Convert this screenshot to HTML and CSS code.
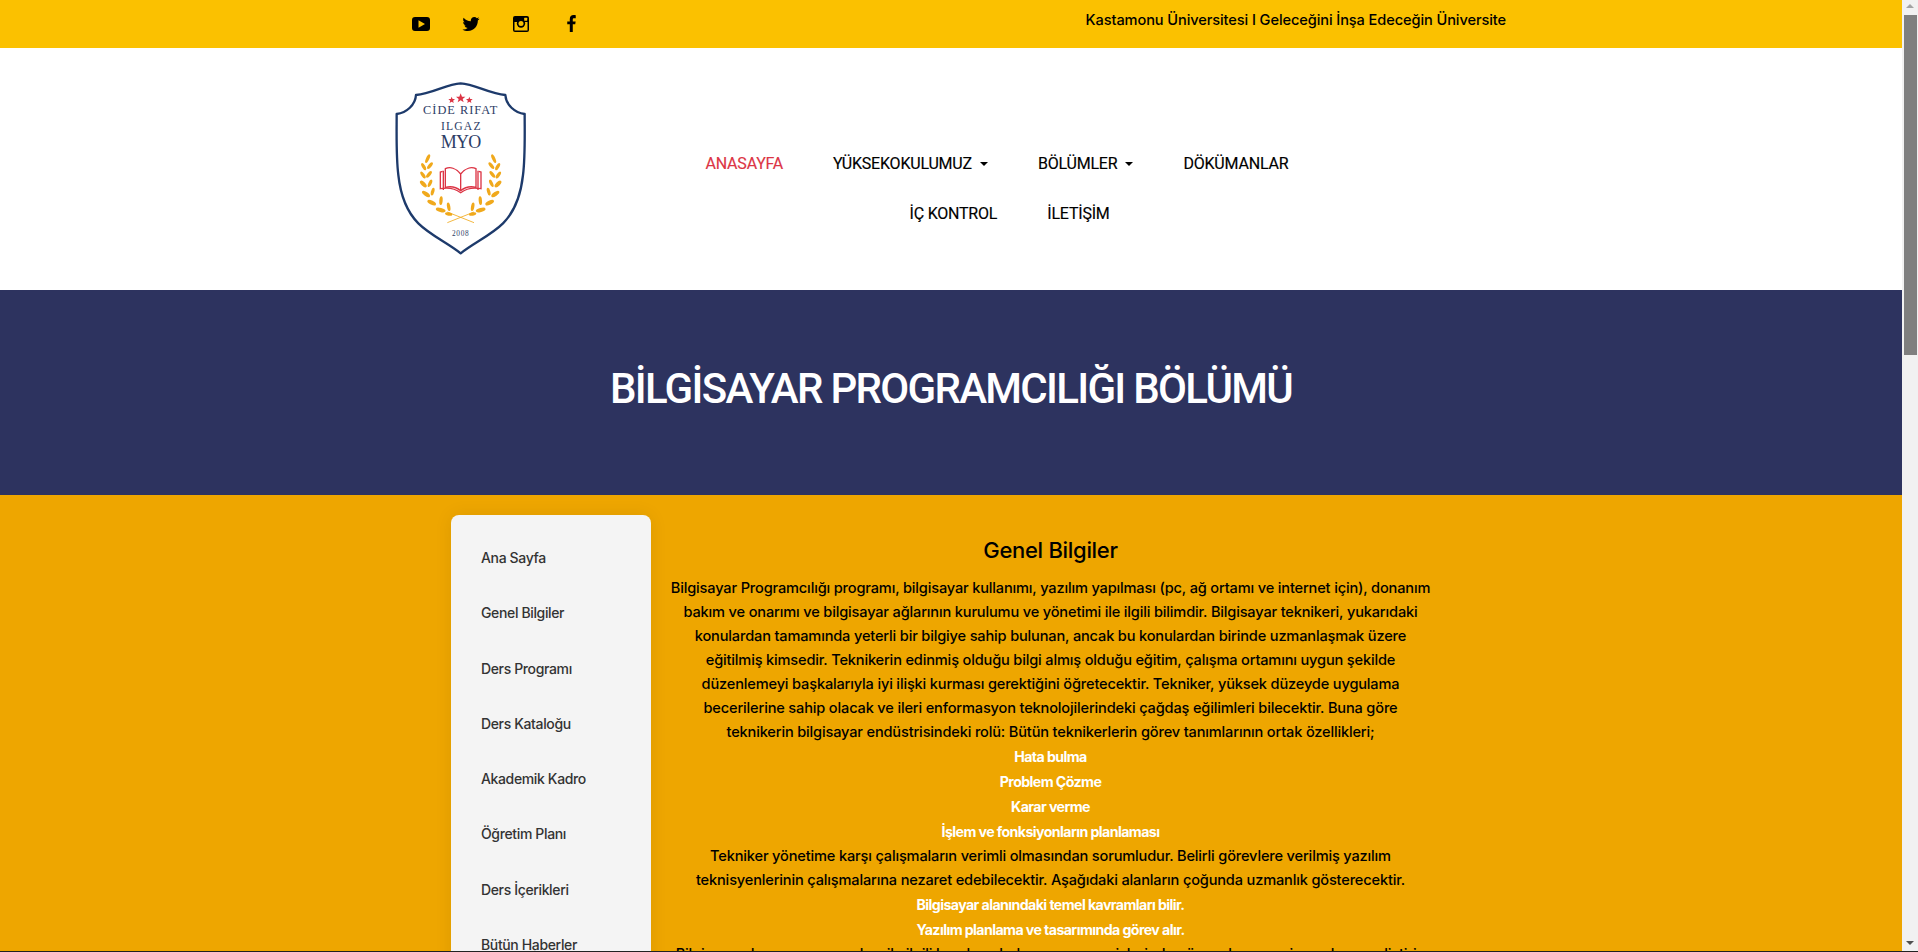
FILE: index.html
```html
<!DOCTYPE html>
<html lang="tr">
<head>
<meta charset="utf-8">
<title>Bilgisayar Programcılığı Bölümü</title>
<link rel="stylesheet" href="styles.css">
</head>
<body>
<div class="app">
  <div class="frame">
    <div class="page">
      <div class="topbar">
        <div class="container topbar-inner">
          <ul class="social">
            <li><svg class="icon" viewBox="0 0 18 14"><path fill="#000" fill-rule="evenodd" d="M3 0h12a3 3 0 0 1 3 3v8a3 3 0 0 1-3 3H3a3 3 0 0 1-3-3V3a3 3 0 0 1 3-3zM6.500 3.200v7.600L13 7z"/></svg></li>
            <li><svg class="icon" viewBox="1 3.500 22 18"><path fill="#000" d="M22.460 6c-.77.35-1.600.58-2.460.69.88-.53 1.560-1.370 1.880-2.380-.83.5-1.750.85-2.720 1.050C18.370 4.500 17.260 4 16 4c-2.350 0-4.270 1.920-4.270 4.290 0 .34.04.67.11.98C8.280 9.090 5.110 7.380 3 4.790c-.37.63-.58 1.370-.58 2.150 0 1.490.75 2.810 1.910 3.560-.71 0-1.370-.2-1.950-.5v.03c0 2.080 1.480 3.820 3.440 4.210a4.220 4.220 0 0 1-1.930.07 4.280 4.280 0 0 0 4 2.980 8.520 8.520 0 0 1-5.330 1.840c-.34 0-.68-.02-1.020-.06C3.440 20.290 5.700 21 8.120 21 16 21 20.330 14.460 20.330 8.790c0-.19 0-.37-.01-.56.84-.6 1.560-1.360 2.140-2.230z"/></svg></li>
            <li><svg class="icon" viewBox="0 0 16 16"><rect width="16" height="16" rx="2" fill="#000"/><rect x="1.500" y="6" width="13" height="8.500" fill="#fbc100"/><rect x="1.500" y="1.500" width="13" height="3.500" fill="#000"/><circle cx="8" cy="7.500" r="4.200" fill="#000"/><circle cx="8" cy="7.500" r="2.500" fill="#fbc100"/><rect x="11.200" y="1.700" width="3" height="3" rx=".5" fill="#fbc100"/></svg></li>
            <li><svg class="icon icon-f" viewBox="0 0 8 16"><path fill="#000" d="M5.200 16V8.800h2.300l.4-2.800H5.200V4.300c0-.8.2-1.300 1.300-1.300H8V.2C7.700.1 6.900 0 5.900 0 3.800 0 2.400 1.300 2.400 3.700V6H0v2.800h2.400V16z"/></svg></li>
          </ul>
          <p class="motto">Kastamonu Üniversitesi I Geleceğini İnşa Edeceğin Üniversite</p>
        </div>
      </div>

      <header class="site-header">
        <div class="container header-inner">
          <svg class="logo" viewBox="0 0 420 540">
            <path class="shield" d="M212 10C170 12 125 42 78 45C76 75 50 98 20 102C20 160 18 230 25 285C31 340 50 395 85 430C120 465 175 490 212 520C249 490 304 465 339 430C374 395 393 340 399 285C406 230 404 160 404 102C374 98 348 75 346 45C299 42 254 12 212 10Z"/>
            <g class="star">
              <path d="M212 40l4 10 10 .6-8 6.400 3 10-9-6-9 6 3-10-8-6.400 10-.6z"/>
              <path d="M185 50l2.800 6.800 7.200.5-5.600 4.600 1.900 7-6.300-4-6.300 4 1.900-7-5.600-4.600 7.200-.5z"/>
              <path d="M238 50l2.800 6.800 7.200.5-5.600 4.600 1.900 7-6.300-4-6.300 4 1.900-7-5.600-4.600 7.200-.5z"/>
            </g>
            <text class="logo-text logo-name" x="212" y="101">CİDE RIFAT</text>
            <text class="logo-text logo-ilgaz" x="214" y="150">ILGAZ</text>
            <text class="logo-text logo-myo" x="212" y="205">MYO</text>
            <g class="laurel">
              <path class="stem" d="M172 396L252 428"/>
              <ellipse cx="113" cy="236" rx="5" ry="14" transform="rotate(25 113 236)"/>
              <ellipse cx="101" cy="260" rx="5" ry="12" transform="rotate(-30 101 260)"/>
              <ellipse cx="120" cy="257" rx="5" ry="12" transform="rotate(40 120 257)"/>
              <ellipse cx="99" cy="285" rx="5" ry="12" transform="rotate(-35 99 285)"/>
              <ellipse cx="117" cy="283" rx="5" ry="12" transform="rotate(40 117 283)"/>
              <ellipse cx="100" cy="312" rx="6" ry="13" transform="rotate(-45 100 312)"/>
              <ellipse cx="120" cy="310" rx="5" ry="12" transform="rotate(25 120 310)"/>
              <ellipse cx="108" cy="342" rx="6" ry="14" transform="rotate(-55 108 342)"/>
              <ellipse cx="128" cy="335" rx="5" ry="12" transform="rotate(15 128 335)"/>
              <ellipse cx="125" cy="368" rx="6" ry="14" transform="rotate(-65 125 368)"/>
              <ellipse cx="153" cy="362" rx="5" ry="13" transform="rotate(5 153 362)"/>
              <ellipse cx="152" cy="390" rx="6" ry="15" transform="rotate(-75 152 390)"/>
              <ellipse cx="176" cy="380" rx="5" ry="13" transform="rotate(-10 176 380)"/>
              <ellipse cx="176" cy="402" rx="5" ry="11" transform="rotate(-80 176 402)"/>
            </g>
            <g class="laurel">
              <path class="stem" d="M252 396L172 428"/>
              <ellipse cx="311" cy="236" rx="5" ry="14" transform="rotate(-25 311 236)"/>
              <ellipse cx="323" cy="260" rx="5" ry="12" transform="rotate(30 323 260)"/>
              <ellipse cx="304" cy="257" rx="5" ry="12" transform="rotate(-40 304 257)"/>
              <ellipse cx="325" cy="285" rx="5" ry="12" transform="rotate(35 325 285)"/>
              <ellipse cx="307" cy="283" rx="5" ry="12" transform="rotate(-40 307 283)"/>
              <ellipse cx="324" cy="312" rx="6" ry="13" transform="rotate(45 324 312)"/>
              <ellipse cx="304" cy="310" rx="5" ry="12" transform="rotate(-25 304 310)"/>
              <ellipse cx="316" cy="342" rx="6" ry="14" transform="rotate(55 316 342)"/>
              <ellipse cx="296" cy="335" rx="5" ry="12" transform="rotate(-15 296 335)"/>
              <ellipse cx="299" cy="368" rx="6" ry="14" transform="rotate(65 299 368)"/>
              <ellipse cx="271" cy="362" rx="5" ry="13" transform="rotate(-5 271 362)"/>
              <ellipse cx="272" cy="390" rx="6" ry="15" transform="rotate(75 272 390)"/>
              <ellipse cx="248" cy="380" rx="5" ry="13" transform="rotate(10 248 380)"/>
              <ellipse cx="248" cy="402" rx="5" ry="11" transform="rotate(80 248 402)"/>
            </g>
            <g class="book">
              <path d="M212 282C198 264 180 260 166 266V322C182 318 200 322 212 332C224 322 242 318 258 322V266C244 260 226 264 212 282V332"/>
              <path d="M158 274L151 276V326C172 322 196 326 212 338C228 326 252 322 273 326V276L266 274"/>
              <path d="M160 272V330"/>
              <path d="M264 272V330"/>
            </g>
            <text class="logo-text logo-year" x="212" y="467">2008</text>
          </svg>
          <nav class="nav">
            <div class="nav-row nav-row-first">
              <a class="nav-link nav-active">ANASAYFA</a>
              <a class="nav-link">YÜKSEKOKULUMUZ<span class="caret"></span></a>
              <a class="nav-link">BÖLÜMLER<span class="caret"></span></a>
              <a class="nav-link">DÖKÜMANLAR</a>
            </div>
            <div class="nav-row nav-row-second">
              <a class="nav-link">İÇ KONTROL</a>
              <a class="nav-link">İLETİŞİM</a>
            </div>
          </nav>
        </div>
      </header>

      <section class="hero">
        <h1 class="hero-title">BİLGİSAYAR PROGRAMCILIĞI BÖLÜMÜ</h1>
      </section>

      <section class="body-band">
        <aside class="side-card">
          <a class="side-link">Ana Sayfa</a>
          <a class="side-link">Genel Bilgiler</a>
          <a class="side-link">Ders Programı</a>
          <a class="side-link">Ders Kataloğu</a>
          <a class="side-link">Akademik Kadro</a>
          <a class="side-link">Öğretim Planı</a>
          <a class="side-link">Ders İçerikleri</a>
          <a class="side-link">Bütün Haberler</a>
        </aside>
        <article class="article">
          <h2 class="article-title">Genel Bilgiler</h2>
          <p class="para">Bilgisayar Programcılığı programı, bilgisayar kullanımı, yazılım yapılması (pc, ağ ortamı ve internet için), donanım<br>bakım ve onarımı ve bilgisayar ağlarının kurulumu ve yönetimi ile ilgili bilimdir. Bilgisayar teknikeri, yukarıdaki<br>konulardan tamamında yeterli bir bilgiye sahip bulunan, ancak bu konulardan birinde uzmanlaşmak üzere<br>eğitilmiş kimsedir. Teknikerin edinmiş olduğu bilgi almış olduğu eğitim, çalışma ortamını uygun şekilde<br>düzenlemeyi başkalarıyla iyi ilişki kurması gerektiğini öğretecektir. Tekniker, yüksek düzeyde uygulama<br>becerilerine sahip olacak ve ileri enformasyon teknolojilerindeki çağdaş eğilimleri bilecektir. Buna göre<br>teknikerin bilgisayar endüstrisindeki rolü: Bütün teknikerlerin görev tanımlarının ortak özellikleri;</p>
          <p class="strong-line">Hata bulma</p>
          <p class="strong-line">Problem Çözme</p>
          <p class="strong-line">Karar verme</p>
          <p class="strong-line">İşlem ve fonksiyonların planlaması</p>
          <p class="para">Tekniker yönetime karşı çalışmaların verimli olmasından sorumludur. Belirli görevlere verilmiş yazılım<br>teknisyenlerinin çalışmalarına nezaret edebilecektir. Aşağıdaki alanların çoğunda uzmanlık gösterecektir.</p>
          <p class="strong-line">Bilgisayar alanındaki temel kavramları bilir.</p>
          <p class="strong-line">Yazılım planlama ve tasarımında görev alır.</p>
          <p class="para">Bilgisayar donanımı ve yazılımı ile ilgili kurulum, bakım ve onarım işlerinde görev alır ve yeni uygulama geliştirir.</p>
        </article>
      </section>
    </div>

    <div class="scrollbar">
      <span class="arrow arrow-up"></span>
      <span class="thumb"></span>
      <span class="track-gap"></span>
      <span class="arrow arrow-down"></span>
    </div>
  </div>
  <div class="edge"></div>
</div>
</body>
</html>
```

FILE: styles.css
```css
* { box-sizing: border-box; }
html, body { margin: 0; padding: 0; height: 100%; overflow: hidden; }
body { font-family: Inter, "Noto Sans", sans-serif; color: #000; background: #fff; }

.app { height: 952px; display: flex; flex-direction: column; }
.frame { flex: 1; min-height: 0; display: flex; }
.edge { height: 1px; background: #222; }
.page { flex: 1; min-width: 0; overflow: hidden; }

.container { width: 1140px; margin: 0 auto; padding: 0 15px; }

/* top bar */
.topbar { height: 48px; background: #fbc100; }
.topbar-inner { display: flex; justify-content: space-between; }
.social { list-style: none; margin: 0; padding: 14.500px 0 0 0; display: flex; }
.social li { width: 50px; height: 18px; display: flex; justify-content: center; align-items: center; }
.icon { width: 18px; height: 16px; display: block; }
.icon-f { width: 9px; height: 17px; }
.motto { margin: 10px 0 0; font-size: 14.6px; line-height: 20px; font-weight: 450; letter-spacing: -0.1px; }

/* header */
.site-header { height: 242px; background: #fff; }
.header-inner { display: flex; }
.logo { width: 140px; height: 180px; margin: 32px 0 0 -6px; display: block; flex: none; }
.shield { fill: #fff; stroke: #1d3a6b; stroke-width: 7; stroke-linejoin: round; }
.star { fill: #dc3545; }
.logo-text { font-family: "Liberation Serif", serif; text-anchor: middle; fill: #2d3d66; }
.logo-name { font-size: 37px; letter-spacing: 3px; }
.logo-ilgaz { font-size: 35px; letter-spacing: 3.500px; }
.logo-myo { font-size: 54px; letter-spacing: -2px; }
.logo-year { font-size: 22px; letter-spacing: 2px; }
.laurel ellipse { fill: #f0a91c; }
.stem { stroke: #f0a91c; stroke-width: 2.5; fill: none; }
.book path { fill: none; stroke: #dc3545; stroke-width: 4; }

.nav { flex: 1; padding-top: 91px; font-family: Roboto, sans-serif; }
.nav-row { display: flex; height: 50px; gap: 50px; align-items: center; }
.nav-row-first { padding-left: 175.500px; }
.nav-row-second { padding-left: 379.500px; }
.nav-link { font-size: 16px; line-height: 24px; letter-spacing: -0.2px; -webkit-text-stroke: 0.15px currentColor; color: #000; white-space: nowrap; }
.nav-active { color: #dc3545; }
.caret { display: inline-block; margin-left: 8px; vertical-align: 3px; border-top: 4.800px solid #000; border-left: 4.800px solid transparent; border-right: 4.800px solid transparent; }

/* hero */
.hero { height: 205px; background: #2d335f; display: flex; justify-content: center; padding-top: 73px; }
.hero-title { margin: 0; font-family: Roboto, sans-serif; font-size: 42px; line-height: 52px; font-weight: 500; letter-spacing: -1.7px; color: #fff; white-space: nowrap; }

/* main band */
.body-band { background: #eea600; display: flex; padding: 20px 0 0 451px; gap: 10px; min-height: 600px; }
.side-card { width: 200px; flex: none; background: #f4f4f4; border-radius: 8px; padding: 15px 0 30px 30px; box-shadow: 0 0 18px rgba(0, 0, 0, 0.08); }
.side-link { display: block; height: 55.3px; line-height: 55.3px; font-size: 14px; font-weight: 450; letter-spacing: -0.36px; color: #333; }

.article { width: 779px; flex: none; text-align: center; padding-top: 20px; }
.article-title { margin: 0 0 11px; font-size: 22px; line-height: 30px; font-weight: 450; letter-spacing: -0.3px; }
.para { margin: 0; font-size: 14.6px; line-height: 24px; font-weight: 450; letter-spacing: -0.17px; white-space: nowrap; }
.strong-line { margin: 0; font-size: 14.2px; line-height: 25px; font-weight: 700; letter-spacing: -0.6px; color: #fff; }

/* scrollbar */
.scrollbar { width: 16px; flex: none; background: #f1f1f1; display: flex; flex-direction: column; align-items: center; }
.arrow { flex: none; width: 0; height: 0; border-left: 4px solid transparent; border-right: 4px solid transparent; }
.arrow-up { margin-top: 4px; border-bottom: 4px solid #a3a3a3; }
.thumb { flex: none; width: 13px; height: 340px; margin: 7px 0 0 1px; background: #7f7f7f; }
.track-gap { flex: 1; }
.arrow-down { margin-bottom: 6px; border-top: 4px solid #505050; }
```
